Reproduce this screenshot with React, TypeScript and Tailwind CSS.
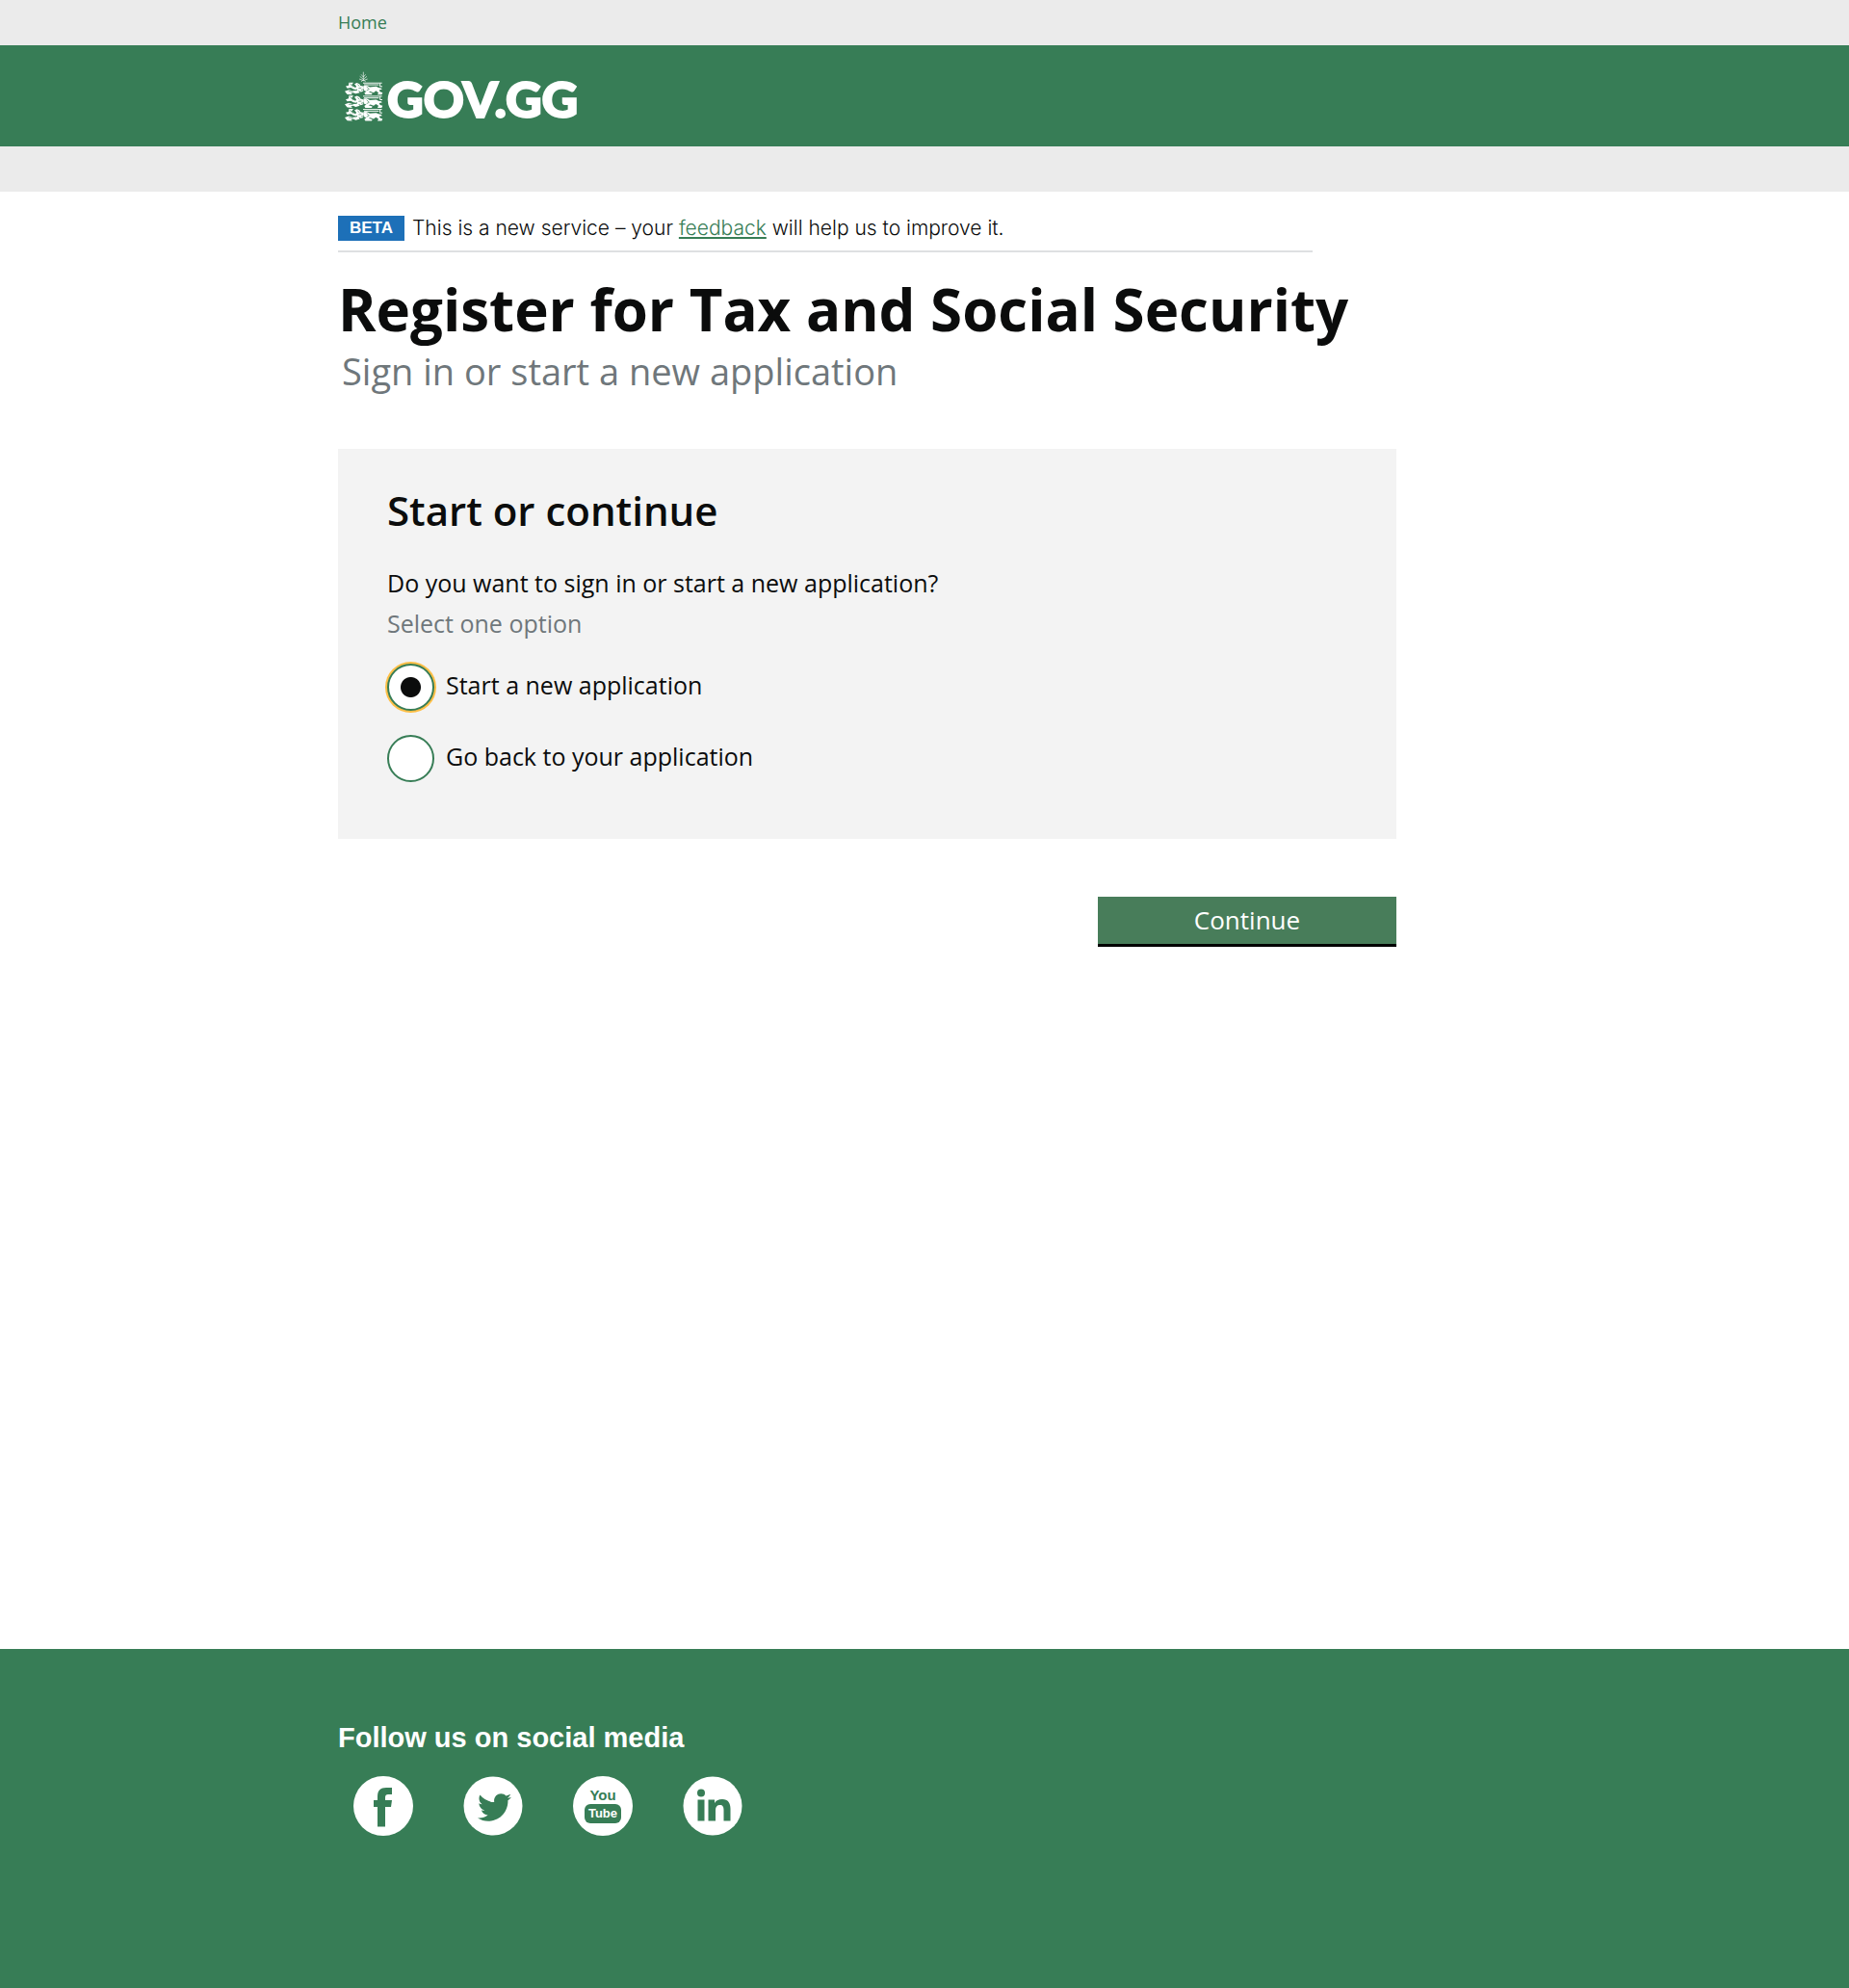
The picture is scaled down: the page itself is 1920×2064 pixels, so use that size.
import React, { useState } from "react";
import { FaTwitter } from "react-icons/fa";

function Lion({ y }: { y: number }) {
  return (
    <g transform={`translate(0 ${y}) scale(1 .9)`}>
      {/* raised fore leg and paws */}
      <path d="M13 1 27 1 21 10 31 18 40 20 36 26 27 24 19 19 8 21 3 14 12 11z" />
      <path d="M0 31 13 26 24 30 42 29 47 36 34 40 26 36 19 38 24 43 8 42 4 37z" />
      {/* head and mane */}
      <path d="M30 6 38 2 46 6 49 12 57 14 60 21 55 25 58 31 50 34 44 30 37 32 39 25 33 21 36 14z" />
      {/* body and hind legs */}
      <path d="M58 12 68 11 78 17 98 15 105 19 114 21 116 25 107 27 110 33 118 36 115 43 102 43 105 36 97 30 90 36 80 32 74 34 86 38 84 43 64 43 61 37 67 32 59 28z" />
      {/* tail */}
      <path d="M57 3H116M60 9H106M110 4V15H117" fill="none" stroke="#fff" strokeWidth="3" />
      {/* inner shading */}
      <path d="M16 5 27 17M40 8l6 6M43 21l9-1M68 16l8 8-8 5M12 31l14 1M51 26l4 3" fill="none" stroke="#377d56" strokeWidth="2" />
    </g>
  );
}

function Crest() {
  return (
    <svg viewBox="0 0 120 156" className="h-[52px] w-10" fill="#fff" aria-hidden="true">
      <g stroke="#fff" strokeWidth="2.2" fill="none" opacity=".85">
        <path d="M58 30V2M58 29 45 24M58 29 71 24M58 25 47 16M58 25 69 16M58 18 51 10M58 18 65 10M51 32 58 27 65 32" />
      </g>
      <Lion y={34} />
      <Lion y={75} />
      <Lion y={116} />
    </svg>
  );
}

function Social({ label, children }: { label: string; children: React.ReactNode }) {
  return (
    <li>
      <a href="#" aria-label={label} className="block text-[#377d56]">
        {children}
      </a>
    </li>
  );
}

function RadioOption({ label, checked, onChange }: { label: string; checked: boolean; onChange: () => void }) {
  return (
    <label className="flex w-fit cursor-pointer items-center gap-3">
      <input
        type="radio"
        name="start"
        checked={checked}
        onChange={onChange}
        className="size-[49px] shrink-0 appearance-none rounded-full border-2 border-[#377d56] bg-white checked:bg-[radial-gradient(circle,#0b0c0c_10px,#fff_11px)] checked:ring-2 checked:ring-[#ffbf47]"
      />
      <span className="pb-1.5 text-[25px] leading-8">{label}</span>
    </label>
  );
}

export default function App() {
  const [choice, setChoice] = useState("new");
  return (
    <div className="flex min-h-screen flex-col bg-white font-['Open_Sans',sans-serif] text-[#0b0c0c]">
      <nav className="bg-[#ebebeb]">
        <div className="mx-auto max-w-[1218px] text-lg leading-[47px]">
          <a href="#" className="text-[#377d56]">Home</a>
        </div>
      </nav>
      <header className="bg-[#377d56]">
        <div className="mx-auto flex h-[105px] max-w-[1218px] items-center">
          <a href="#" className="flex items-center gap-1 pl-[7px] text-white">
            <Crest />
            <span className="pt-1 font-['Lato',sans-serif] text-[52px] leading-none font-black [-webkit-text-stroke:2px_white]">GOV.GG</span>
          </a>
        </div>
      </header>
      <div className="h-[47px] bg-[#ebebeb]" />

      <main className="mx-auto w-full max-w-[1218px] grow pb-20">
        <div className="mt-[25px] flex max-w-[1012px] items-center gap-2 border-b-2 border-[#dee0e2] pb-2.5">
          <strong className="bg-[#1d70b8] px-3 font-['Liberation_Sans',sans-serif] text-[17px] leading-[26px] text-white">BETA</strong>
          <p className="font-['Inter',sans-serif] text-[21px] leading-[26px] font-light">
            This is a new service – your{" "}
            <a href="#" className="text-[#377d56] underline">feedback</a> will help us to improve it.
          </p>
        </div>
        <h1 className="mt-[23px] text-[60px] leading-[72px] font-bold">Register for Tax and Social Security</h1>
        <p className="mt-1 pl-1 text-[38px] leading-[48px] text-[#6f777b]">Sign in or start a new application</p>

        <form className="max-w-[1099px]" onSubmit={(e) => e.preventDefault()}>
          <section className="mt-[57px] bg-[#f3f3f3] px-[51px] pt-9 pb-[59px]">
            <h2 className="text-[42px] leading-[56px] font-semibold">Start or continue</h2>
            <fieldset className="mt-[31px]">
              <legend className="text-[25px] leading-8">Do you want to sign in or start a new application?</legend>
              <p className="mt-2.5 text-[25px] leading-8 text-[#6f777b]">Select one option</p>
              <div className="mt-[26px] flex flex-col gap-[25px]">
                <RadioOption label="Start a new application" checked={choice === "new"} onChange={() => setChoice("new")} />
                <RadioOption label="Go back to your application" checked={choice === "back"} onChange={() => setChoice("back")} />
              </div>
            </fieldset>
          </section>
          <button type="submit" className="mt-[60px] ml-auto block h-[52px] w-[310px] border-b-3 border-black bg-[#487d5a] pb-0.5 text-[26px] leading-8 text-white">
            Continue
          </button>
        </form>
      </main>

      <footer className="bg-[#377d56] pt-[74px] pb-[158px]">
        <div className="mx-auto max-w-[1218px]">
          <h2 className="font-['Liberation_Sans',sans-serif] text-[29px] leading-9 font-bold text-white">Follow us on social media</h2>
          <ul className="mt-[22px] flex gap-[52px] pl-4">
            <Social label="Facebook">
              <svg viewBox="0 0 62 62" className="size-[62px]">
                <circle cx="31" cy="31" r="31" fill="#fff" />
                <path d="M25 52.500V32h-4v-7h4v-4c0-6 3-9 9-9h6v7h-4c-2 0-3 1-3 3v3h7l-1 7h-6v20.500z" fill="currentColor" />
              </svg>
            </Social>
            <Social label="Twitter">
              <svg viewBox="0 0 62 62" className="size-[62px]">
                <circle cx="31" cy="31" r="30.5" fill="#fff" />
                <FaTwitter x="15" y="15" size="35" />
              </svg>
            </Social>
            <Social label="YouTube">
              <span className="flex size-[62px] flex-col items-center rounded-full bg-white pt-3 font-['Liberation_Sans_Narrow','Liberation_Sans',sans-serif] font-bold">
                <span className="text-[15px] leading-4">You</span>
                <span className="mt-px h-5 w-[38px] rounded-md bg-[#377d56] text-center text-[13px] leading-5 text-white">Tube</span>
              </span>
            </Social>
            <Social label="LinkedIn">
              <svg viewBox="0 0 62 62" className="size-[62px]">
                <circle cx="31" cy="31" r="30.5" fill="#fff" />
                <circle cx="19" cy="17.5" r="4" fill="currentColor" />
                <path d="M15.500 24.500h7v22h-7zM26.500 24.500H33V28c2-3 4-4 8-4 6 0 8.500 4 8.500 10v12.500h-7V35c0-3-1-5-4-5s-4.500 2-4.500 5v11.500h-7.500z" fill="currentColor" />
              </svg>
            </Social>
          </ul>
        </div>
      </footer>
    </div>
  );
}
